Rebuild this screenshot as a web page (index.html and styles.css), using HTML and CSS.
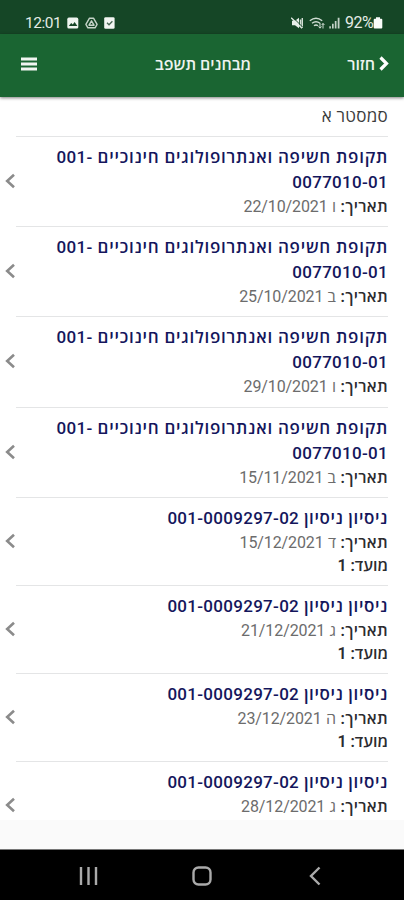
FILE: index.html
```
<!DOCTYPE html>
<html lang="he" dir="rtl">
<head>
<meta charset="utf-8">
<title>מבחנים תשפב</title>
<link rel="stylesheet" href="styles.css">
</head>
<body>
<div class="status" dir="ltr">
  <div class="status-left">
    <span class="clock">12:01</span>
    <svg width="12" height="12" viewBox="0 0 12 12"><rect x=".3" y=".6" width="11" height="11" rx="1.6" fill="#eef4ef"/><path d="M1.8 9 4.2 6l1.6 1.6L7.6 5l2.8 4z" fill="#154626"/></svg>
    <svg width="13" height="12" viewBox="0 0 13 12" fill="none" stroke="#c5d3c8" stroke-width="1.4" stroke-linejoin="round"><path d="M4.5 1.2h4l3.600 6.200-2 3.400H2.900l-2-3.400z"/><path d="M6.500 3.800 4 8.200h5z"/></svg>
    <svg width="11" height="12" viewBox="0 0 11 12"><rect x=".2" y=".2" width="10.4" height="11.6" rx="1.4" fill="#f2f6f2"/><path d="m3 5.800 2 2 3.400-3.600" fill="none" stroke="#476652" stroke-width="1.3"/></svg>
  </div>
  <div class="status-right">
    <svg width="13" height="12" viewBox="0 0 13 12"><path d="M1 3.800h3L8 .8v10.400l-4-3H1z" fill="#e8efe9"/><path d="M9.500 2.500v7M11.300 1v10" fill="none" stroke="#d4dfd6" stroke-width="1.400"/><path d="m1.500 0 10.500 10.500" stroke="#154626"/><path d="m.2 .8 10.800 10.500" stroke="#e8efe9" stroke-width="1.200"/></svg>
    <svg class="wifi" width="16" height="12" viewBox="0 0 16 12" fill="none" stroke="#d0ddd3" stroke-width="1.4"><path d="M.8 3.800q6.200-5 12.400 0M3 6.300q4-3 8 0M5 8.700q2-1.500 4 0"/><path d="M11 6v5M9.500 9.500 11 11.200l1.500-1.700M14 11.500V6.500M12.700 8 14 6.400 15.400 8" stroke-width="1"/></svg>
    <svg class="signal" width="11" height="12" viewBox="0 0 11 12" fill="#c3d2c7"><path d="M.3 9.200h1.600V11.500H.3zM3 6.800h1.700v4.700H3zM5.800 4h1.700v7.500H5.800zM8.700.8h1.800v10.700H8.700z"/></svg>
    <span class="battery-text">92%</span>
    <svg width="10" height="12" viewBox="0 0 10 12"><path d="M3 .3h4v1.500h1.300q1 0 1 1v7.700q0 1-1 1H1.700q-1 0-1-1V2.800q0-1 1-1H3z" fill="#fafcfa"/></svg>
  </div>
</div>
<header class="bar">
  <div class="back"><svg width="10" height="15" viewBox="0 0 10 15"><path d="m1.500 1.500 6 6-6 6" fill="none" stroke="#fff" stroke-width="3.200"/></svg><span>חזור</span></div>
  <h1>מבחנים תשפב</h1>
  <svg class="menu" width="16" height="14" viewBox="0 0 16 14"><path d="M0 1.900h16M0 6.900h16M0 11.900h16" stroke="#f1f5f1" stroke-width="3"/></svg>
</header>
<main>
  <h2>סמסטר א</h2>
  <ul>
    <li><div class="title long">תקופת חשיפה ואנתרופולוגים חינוכיים <span class="code">001-<wbr>0077010-01</span></div><div class="line"><b>תאריך:</b> ו <span class="num">22/10/2021</span></div><svg class="go" width="10" height="16" viewBox="0 0 10 16"><path d="M9 1.800 2.200 8 9 14.200"/></svg></li>
    <li><div class="title long">תקופת חשיפה ואנתרופולוגים חינוכיים <span class="code">001-<wbr>0077010-01</span></div><div class="line"><b>תאריך:</b> ב <span class="num">25/10/2021</span></div><svg class="go" width="10" height="16" viewBox="0 0 10 16"><path d="M9 1.800 2.200 8 9 14.200"/></svg></li>
    <li><div class="title long">תקופת חשיפה ואנתרופולוגים חינוכיים <span class="code">001-<wbr>0077010-01</span></div><div class="line"><b>תאריך:</b> ו <span class="num">29/10/2021</span></div><svg class="go" width="10" height="16" viewBox="0 0 10 16"><path d="M9 1.800 2.200 8 9 14.200"/></svg></li>
    <li><div class="title long">תקופת חשיפה ואנתרופולוגים חינוכיים <span class="code">001-<wbr>0077010-01</span></div><div class="line"><b>תאריך:</b> ב <span class="num">15/11/2021</span></div><svg class="go" width="10" height="16" viewBox="0 0 10 16"><path d="M9 1.800 2.200 8 9 14.200"/></svg></li>
    <li><div class="title">ניסיון ניסיון <span class="code">001-0009297-02</span></div><div class="line"><b>תאריך:</b> ד <span class="num">15/12/2021</span></div><div class="line"><b class="term">מועד: 1</b></div><svg class="go" width="10" height="16" viewBox="0 0 10 16"><path d="M9 1.800 2.200 8 9 14.200"/></svg></li>
    <li><div class="title">ניסיון ניסיון <span class="code">001-0009297-02</span></div><div class="line"><b>תאריך:</b> ג <span class="num">21/12/2021</span></div><div class="line"><b class="term">מועד: 1</b></div><svg class="go" width="10" height="16" viewBox="0 0 10 16"><path d="M9 1.800 2.200 8 9 14.200"/></svg></li>
    <li><div class="title">ניסיון ניסיון <span class="code">001-0009297-02</span></div><div class="line"><b>תאריך:</b> ה <span class="num">23/12/2021</span></div><div class="line"><b class="term">מועד: 1</b></div><svg class="go" width="10" height="16" viewBox="0 0 10 16"><path d="M9 1.800 2.200 8 9 14.200"/></svg></li>
    <li><div class="title">ניסיון ניסיון <span class="code">001-0009297-02</span></div><div class="line"><b>תאריך:</b> ג <span class="num">28/12/2021</span></div><svg class="go last" width="10" height="16" viewBox="0 0 10 16"><path d="M9 1.800 2.200 8 9 14.200"/></svg></li>
  </ul>
</main>
<div class="strip"></div>
<nav dir="ltr">
  <svg width="20" height="20" viewBox="0 0 20 20"><path d="M2 1v18M9.500 1v18M17 1v18"/></svg>
  <svg width="20" height="20" viewBox="0 0 20 20"><rect x="1.500" y="1.500" width="17" height="17" rx="5"/></svg>
  <svg width="20" height="20" viewBox="0 0 20 20"><path d="M14.500 1.500 6 10l8.500 8.500"/></svg>
</nav>
</body>
</html>
```
FILE: styles.css
```
* { box-sizing: border-box; }
body {
  margin: 0;
  height: 900px;
  display: flex;
  flex-direction: column;
  overflow: hidden;
  background: #fff;
  font-family: Roboto, "Open Sans", sans-serif;
}
svg { flex: none; display: block; }
.status {
  height: 34px;
  padding: 12px 21px 0 25px;
  display: flex;
  justify-content: space-between;
  background: #154626;
  color: #e4ece5;
  font-size: 15px;
  line-height: 22px;
}
.status-left, .status-right { display: flex; align-items: center; height: 22px; }
.status-left { gap: 6px; }
.clock { width: 36px; font-size: 15.500px; letter-spacing: -.5px; }
.wifi { margin-left: 5px; }
.signal { margin-left: 4px; }
.battery-text { margin: 0 0 0 5px; font-size: 16px; letter-spacing: -.6px; }
.bar {
  height: 63px;
  flex: none;
  padding: 0 15px 4px 21px;
  display: grid;
  grid-template-columns: 1fr auto 1fr;
  align-items: center;
  background: #1a6532;
  color: #eef4ef;
  box-shadow: 0 1px 3px rgba(0, 0, 0, .5);
  z-index: 1;
}
.back { display: flex; gap: 4px; align-items: center; font-size: 16px; font-weight: 600; }
h1 { margin: 0; padding-right: 4px; font-size: 16px; font-weight: 600; }
.menu { justify-self: end; }
main { height: 723px; flex: none; padding: 7px 16px 0; overflow: hidden; }
h2 { margin: 0; height: 32px; font-size: 17px; line-height: 24px; font-weight: 400; letter-spacing: .3px; color: #3c3c3c; }
ul { margin: 0; padding: 0; list-style: none; }
li {
  position: relative;
  border-top: 1.5px solid #e4e5e6;
  padding: 8px 0 8.200px;
}
.title { font-size: 17px; line-height: 25px; font-weight: 600; color: #14165c; letter-spacing: .6px; }
.title.long { letter-spacing: .75px; }
.title .code { font-weight: 500; letter-spacing: .3px; }
.line { font-size: 16px; line-height: 23px; color: #6c6c6c; letter-spacing: .3px; }
.line b { font-weight: 600; color: #2c2c30; }
.num { letter-spacing: -.1px; }
.line .term { letter-spacing: 0; }
.go { position: absolute; left: -11px; top: calc(50% - 8.500px); fill: none; stroke: #8b8b8b; stroke-width: 2.600; }
.go.last { top: 34.500px; }
.strip { height: 30px; flex: none; background: #fafafa; border-bottom: 1px solid #777; }
nav { height: 50px; flex: none; padding: 1px 79px 0; display: flex; justify-content: space-between; align-items: center; background: #000; }
nav svg { fill: none; stroke: #aaa; stroke-width: 2.400; }
```
